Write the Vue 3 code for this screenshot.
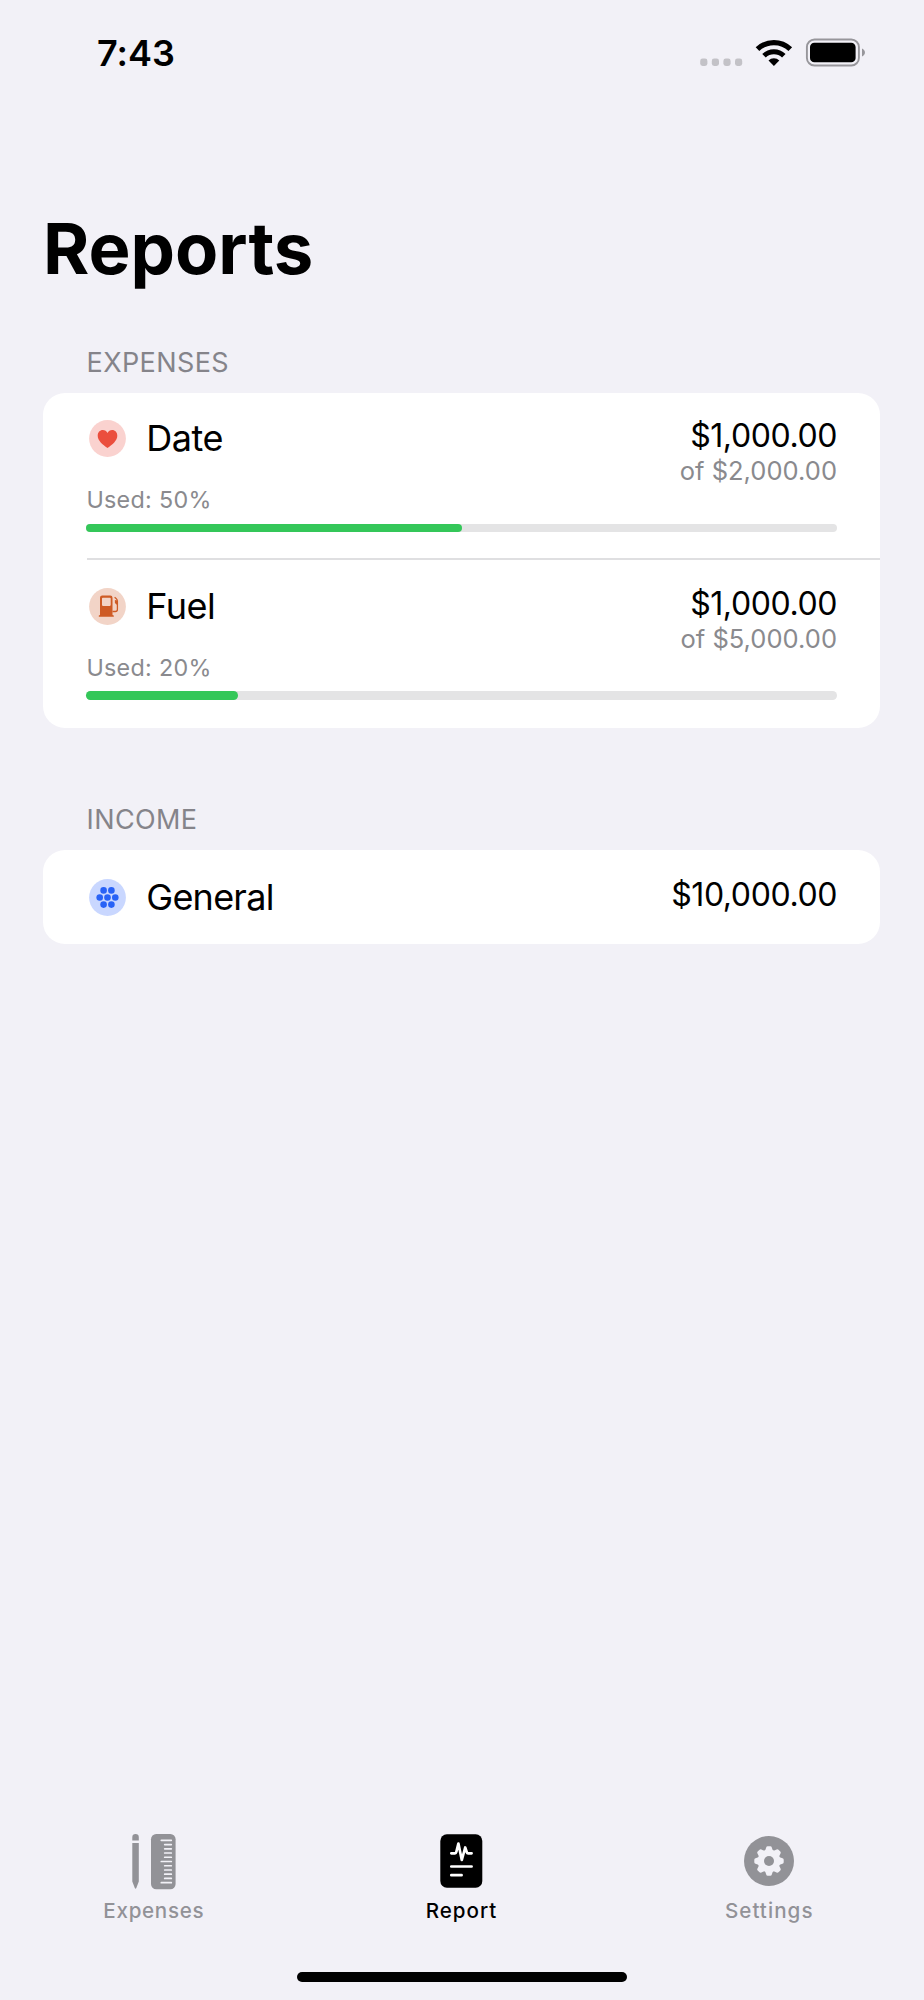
<script setup>
const expenses = [
  { name: 'Date', icon: 'heart', amount: '$1,000.00', budget: 'of $2,000.00', used: 50, fill: 50 },
  { name: 'Fuel', icon: 'fuel', amount: '$1,000.00', budget: 'of $5,000.00', used: 20, fill: 20.15 },
]
const rulerTicks = Array.from({ length: 11 }, (_, i) => ({ y: 6.3 + i * 4.24, long: i % 5 === 0 }))
const teeth = [0, 45, 90, 135, 180, 225, 270, 315]
const dots = [[-3.9, -7.1], [3.9, -7.1], [-7.8, 0], [0, 0], [7.8, 0], [-3.9, 7.1], [3.9, 7.1]]
</script>

<template>
  <div class="screen">
    <header class="status">
      <span class="time">7:43</span>
      <svg class="indicators" width="166" height="30" viewBox="0 0 166 30">
        <g fill="#c3c2c7">
          <rect v-for="i in 4" :key="i" :x="0.2 + (i - 1) * 11.6" y="20.5" width="7.2" height="7.4" rx="2.4" />
        </g>
        <g transform="translate(73.9 28)">
          <path d="M0 0L-5.4-5.4A7.6 7.6 0 0 1 5.4-5.4Z" />
          <path d="M-9.9-10.2A14.2 14.2 0 0 1 9.9-10.2" fill="none" stroke="#000" stroke-width="5" />
          <path d="M-16.4-16.8A23.6 23.6 0 0 1 16.4-16.8" fill="none" stroke="#000" stroke-width="5.2" />
        </g>
        <rect x="106.9" y="1.5" width="52" height="26" rx="7.6" fill="none" stroke="#97969b" stroke-width="1.9" />
        <rect x="110" y="4.7" width="45.6" height="19.6" rx="4.4" />
        <path d="M162 10.5v8c3.9-1.5 3.9-6.5 0-8z" fill="#97969b" />
      </svg>
    </header>

    <h1 class="title">Reports</h1>

    <h2 class="label">EXPENSES</h2>
    <section class="card">
      <div v-for="e in expenses" :key="e.name" class="row">
        <div class="top">
          <div class="category">
            <svg v-if="e.icon === 'heart'" class="badge" viewBox="0 0 37 37">
              <circle cx="18.5" cy="18.5" r="18.4" fill="#fad2cf" />
              <path d="M18.5 28C13.5 24.6 8.7 20.4 8.7 15.7C8.7 12.3 10.9 10 13.8 10C15.9 10 17.6 11.1 18.5 13C19.4 11.1 21.1 10 23.2 10C26.1 10 28.3 12.3 28.3 15.7C28.3 20.4 23.5 24.6 18.5 28Z" fill="#eb4e3d" />
            </svg>
            <svg v-else class="badge" viewBox="0 0 37 37">
              <circle cx="18.5" cy="18.5" r="18.4" fill="#f2d4c7" />
              <path fill-rule="evenodd" d="M11 27V9.7Q11 7.5 13.2 7.5H21.3Q23.500 7.500 23.500 9.700V27L24.800 27.500V28.700H9.800V27.500ZM13.800 9.700Q13 9.700 13 10.500V17.100Q13 17.900 13.800 17.900H20.900Q21.700 17.900 21.700 17.100V10.500Q21.700 9.700 20.900 9.700Z" fill="#ce5b25" />
              <path d="M23.5 23.500H26.300Q28.400 23.500 28.400 21.500V13.200Q28.400 11.500 27.100 10.500L25.600 9.300" fill="none" stroke="#ce5b25" stroke-width="1.3" />
              <path d="M28.4 12.5L25.900 12V15L28.400 17.200Z" fill="#ce5b25" />
            </svg>
            <span class="name">{{ e.name }}</span>
          </div>
          <div class="figures">
            <span class="amount">{{ e.amount }}</span>
            <span class="budget">{{ e.budget }}</span>
          </div>
        </div>
        <div class="used">Used: {{ e.used }}%</div>
        <div class="track"><div class="fill" :style="{ width: e.fill + '%' }"></div></div>
      </div>
    </section>

    <h2 class="label income">INCOME</h2>
    <section class="card">
      <div class="row single">
        <div class="top">
          <div class="category">
            <svg class="badge" viewBox="0 0 37 37">
              <circle cx="18.5" cy="18.5" r="18.4" fill="#c9d7ff" />
              <circle v-for="(d, i) in dots" :key="i" :cx="18.5 + d[0]" :cy="18.5 + d[1]" r="3.3" fill="#2862f6" />
            </svg>
            <span class="name general">General</span>
          </div>
          <div class="figures"><span class="amount">$10,000.00</span></div>
        </div>
      </div>
    </section>

    <footer class="footer">
      <nav class="tabs">
        <div class="tab">
          <svg width="56" height="60" viewBox="0 0 56 60">
            <g fill="#929297">
              <path d="M6.3 8.5V5.2Q6.3 2 9.550 2Q12.800 2 12.800 5.200V8.500ZM6.300 11H12.800V49.500L10.300 56Q9.550 57.500 8.800 56L6.300 49.500Z" />
              <rect x="25" y="2" width="24.6" height="55.2" rx="5.2" />
            </g>
            <path v-for="(t, i) in rulerTicks" :key="i" :d="`M${t.long ? 35.3 : 38.7} ${t.y + 2}H45.3`" stroke="#f2f1f7" stroke-width="1.7" stroke-linecap="round" />
          </svg>
          <span class="t-expenses">Expenses</span>
        </div>
        <div class="tab active">
          <svg width="56" height="60" viewBox="0 0 56 60">
            <g transform="translate(-0.7 0)">
              <rect x="7" y="2.3" width="42" height="53.4" rx="6.6" />
              <path d="M18 21.3H21.7Q22.700 21.300 23 20L25.100 11.500L28.500 28L31.900 15.500L33.500 20.300Q33.800 21.300 34.800 21.300H38.300M18 34.500H38.300M18 43.200H28.300" fill="none" stroke="#fff" stroke-width="2.7" stroke-linecap="round" stroke-linejoin="round" />
            </g>
          </svg>
          <span class="t-report">Report</span>
        </div>
        <div class="tab">
          <svg width="56" height="60" viewBox="0 0 56 60">
            <circle cx="28" cy="29" r="25" fill="#929297" />
            <g transform="translate(28 29)">
              <circle r="11.4" fill="#f2f1f7" />
              <path v-for="a in teeth" :key="a" :transform="`rotate(${a})`" d="M-4-10L-2.8-13.5Q-2.5-14.7-1.3-14.7H1.3Q2.5-14.7 2.8-13.5L4-10Z" fill="#f2f1f7" />
              <circle r="5" fill="#929297" />
            </g>
          </svg>
          <span class="t-settings">Settings</span>
        </div>
      </nav>
      <div class="home"></div>
    </footer>
  </div>
</template>

<style>
body { background: #f2f1f7; }
</style>

<style scoped>
.screen {
  box-sizing: border-box;
  width: 924px;
  height: 2000px;
  display: flex;
  flex-direction: column;
  overflow: hidden;
  background: #f2f1f7;
  color: #000;
  font-family: Inter, "Liberation Sans", sans-serif;
  font-feature-settings: "calt" 0;
}
.status {
  height: 105px;
  flex: none;
  display: flex;
  justify-content: space-between;
  align-items: center;
  padding: 0 58px 0 97px;
}
.time { font-size: 36px; font-weight: 600; line-height: 44px; letter-spacing: 0; }
.indicators { display: block; }
.title {
  margin: 99px 0 0 43px;
  font-size: 70.6px;
  line-height: 89px;
  font-weight: 700;
  letter-spacing: 0;
}
.label {
  margin: 55px 0 0 86.5px;
  padding-bottom: 14.7px;
  font-size: 27px;
  line-height: 30px;
  font-weight: 400;
  letter-spacing: 0.4px;
  color: #85848a;
}
.label.income { margin-top: 76.7px; padding-bottom: 15.5px; }
.card {
  margin: 0 43.6px 0 43.4px;
  background: #fff;
  border-radius: 22px;
}
.row {
  position: relative;
  padding: 25.7px 43px 28px;
}
.row:not(:last-child)::after {
  content: "";
  position: absolute;
  left: 43.5px;
  right: 0;
  bottom: 0;
  height: 2px;
  background: #dfdfe1;
}
.row.single { padding: 26.8px 43px 26px; }
.top { display: flex; justify-content: space-between; align-items: flex-start; }
.category { display: flex; align-items: center; height: 41px; padding-left: 2.7px; }
.badge { width: 37px; height: 37px; flex: none; }
.name { margin-left: 20.2px; font-size: 36px; line-height: 41px; letter-spacing: -0.5px; }
.name.general { letter-spacing: -0.75px; }
.figures { display: flex; flex-direction: column; align-items: flex-end; }
.amount { margin-right: 0.4px; font-size: 32px; line-height: 36px; letter-spacing: -0.4px; }
.budget { margin-right: 0.4px; font-size: 25.5px; line-height: 33px; letter-spacing: 0.03px; color: #8a8a8e; }
.used { font-size: 23.3px; line-height: 26px; letter-spacing: 0.3px; color: #8a8a8e; }
.track {
  margin-top: 10.3px;
  height: 8.7px;
  border-radius: 4.4px;
  background: #e4e4e5;
}
.fill { height: 100%; border-radius: 4.4px; background: #34c759; }
.footer { margin-top: auto; height: 168px; flex: none; }
.tabs { display: grid; grid-template-columns: repeat(3, 307.7px); }
.tab {
  display: flex;
  flex-direction: column;
  align-items: center;
  color: #929297;
  font-size: 20.6px;
  font-weight: 500;
  line-height: 28px;
}
.tab svg { display: block; margin-bottom: 5px; }
.tab.active { color: #000; }
.t-expenses { letter-spacing: 0.7px; }
.t-report { letter-spacing: 1px; }
.t-settings { letter-spacing: 1.05px; }
.home {
  width: 330px;
  height: 10px;
  margin: 46.5px auto 0;
  border-radius: 5px;
  background: #000;
}
</style>
